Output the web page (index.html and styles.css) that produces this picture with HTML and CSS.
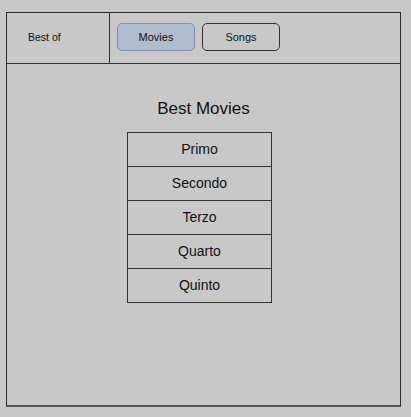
FILE: index.html
```html
<!DOCTYPE html>
<html lang="en">
    <head>
        <meta charset="UTF-8">
        <meta name="viewport" content="width=device-width, initial-scale=1.0">
        <title>Best of</title>
        <link rel="stylesheet" href="styles.css">
    </head>
    <body>
        <div class="frame">
            <div class="header">
                <div class="brand">Best of</div>
                <div class="tabs">
                    <button class="tab active">Movies</button>
                    <button class="tab">Songs</button>
                </div>
            </div>

            <div class="content">
                <h1 class="title">Best Movies</h1>
                <ul class="list">
                    <li>Primo</li>
                    <li>Secondo</li>
                    <li>Terzo</li>
                    <li>Quarto</li>
                    <li>Quinto</li>
                </ul>
            </div>
        </div>
    </body>
</html>
```

FILE: styles.css
```css
body {
    margin: 0;
    padding: 12px 0 0 6px;
    background: #c8c8c8;
    font-family: "Liberation Sans", Arial, sans-serif;
    color: #111;
}

.frame {
    width: 393px;
    height: 392px;
    border: 1px solid #2a2a2a;
    border-bottom: 2px solid #555;
    display: flex;
    flex-direction: column;
}

.header {
    display: flex;
    height: 50px;
    border-bottom: 1px solid #333;
}
.brand {
    width: 81px;
    padding-left: 21px;
    border-right: 1px solid #333;
    display: flex;
    align-items: center;
    font-size: 10.5px;
    padding-bottom: 2px;
}
.tabs {
    display: flex;
    align-items: center;
    gap: 7px;
    padding-left: 7px;
    padding-bottom: 2px;
}
.tab {
    width: 78px;
    height: 28px;
    border: 1px solid #333;
    border-radius: 5px;
    background: #c8c8c8;
    font-family: inherit;
    font-size: 11px;
    color: #111;
    padding: 0;
}
.tab.active {
    background: #b1bccf;
    border-color: #7f90ac;
}

.content {
    display: flex;
    flex-direction: column;
    align-items: center;
}
.title {
    margin: 34px 0 12px;
    font-size: 17px;
    font-weight: normal;
    line-height: 22px;
}
.list {
    list-style: none;
    margin: 0 8px 0 0;
    padding: 0;
    width: 143px;
    border: 1px solid #333;
    border-bottom: 0;
}
.list li {
    height: 34px;
    padding-bottom: 1px;
    box-sizing: border-box;
    border-bottom: 1px solid #333;
    display: flex;
    align-items: center;
    justify-content: center;
    font-size: 14px;
}
```
